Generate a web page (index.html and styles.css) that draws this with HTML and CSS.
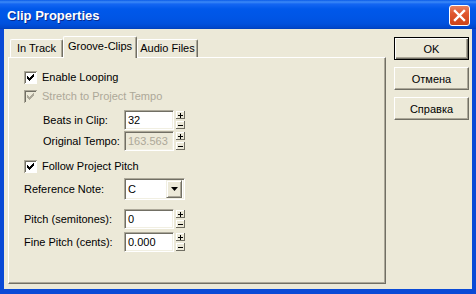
FILE: index.html
```html
<!DOCTYPE html>
<html lang="en">
<head>
    <meta charset="UTF-8">
    <title>Clip Properties</title>
    <link rel="stylesheet" href="styles.css">
</head>
<body>
    <div class="window">
        <div class="titlebar">
            <span class="title">Clip Properties</span>
            <div class="close">
                <svg width="19" height="19" viewBox="0 0 19 19">
                    <path d="M5 5L14 14M14 5L5 14" stroke="#fff" stroke-width="2.4" stroke-linecap="square"/>
                </svg>
            </div>
        </div>
        <div class="frame">
            <div class="sheet">
                <div class="tabs">
                    <div class="tab tab-track">In Track</div>
                    <div class="tab tab-groove active">Groove-Clips</div>
                    <div class="tab tab-audio">Audio Files</div>
                </div>
                <div class="panel">
                    <div class="check-row">
                        <svg class="check" width="13" height="13" viewBox="0 0 13 13">
                            <rect width="13" height="13" fill="#fff"/>
                            <path d="M0 0h13v1h-12v12h-1z" fill="#aca899"/>
                            <path d="M1 1h11v1h-10v10h-1z" fill="#716f64"/>
                            <path d="M3 5h1v3h-1zM4 6h1v3h-1zM5 7h1v3h-1zM6 6h1v3h-1zM7 5h1v3h-1zM8 4h1v3h-1zM9 3h1v3h-1z" fill="#000"/>
                        </svg>
                        <span class="check-label">Enable Looping</span>
                    </div>
                    <div class="check-row disabled stretch">
                        <svg class="check" width="13" height="13" viewBox="0 0 13 13">
                            <rect width="13" height="13" fill="#ece9d8"/>
                            <path d="M0 0h13v1h-12v12h-1z" fill="#aca899"/>
                            <path d="M1 1h11v1h-10v10h-1z" fill="#716f64"/>
                            <path d="M3 5h1v3h-1zM4 6h1v3h-1zM5 7h1v3h-1zM6 6h1v3h-1zM7 5h1v3h-1zM8 4h1v3h-1zM9 3h1v3h-1z" fill="#aca899"/>
                        </svg>
                        <span class="check-label">Stretch to Project Tempo</span>
                    </div>

                    <div class="tempo-fields">
                        <div class="field-row">
                            <span class="field-label sub">Beats in Clip:</span>
                            <div class="edit">32</div>
                            <svg class="spin" width="9" height="18" viewBox="0 0 9 18">
                                <path d="M0 0h9v8h-9z" fill="#ece9d8"/>
                                <path d="M0 0h9v1h-8v7h-1z" fill="#fff"/>
                                <path d="M8 0h1v8h-9v-1h8z" fill="#716f64"/>
                                <path d="M2 4h5v1h-5zM4 2h1v5h-1z" fill="#000"/>
                                <path d="M0 10h9v8h-9z" fill="#ece9d8"/>
                                <path d="M0 10h9v1h-8v7h-1z" fill="#fff"/>
                                <path d="M8 10h1v8h-9v-1h8z" fill="#716f64"/>
                                <path d="M2 14h5v1h-5z" fill="#000"/>
                            </svg>
                        </div>
                        <div class="field-row">
                            <span class="field-label sub">Original Tempo:</span>
                            <div class="edit disabled">163.563</div>
                            <svg class="spin" width="9" height="18" viewBox="0 0 9 18">
                                <path d="M0 0h9v8h-9z" fill="#ece9d8"/>
                                <path d="M0 0h9v1h-8v7h-1z" fill="#fff"/>
                                <path d="M8 0h1v8h-9v-1h8z" fill="#716f64"/>
                                <path d="M2 4h5v1h-5zM4 2h1v5h-1z" fill="#000"/>
                                <path d="M0 10h9v8h-9z" fill="#ece9d8"/>
                                <path d="M0 10h9v1h-8v7h-1z" fill="#fff"/>
                                <path d="M8 10h1v8h-9v-1h8z" fill="#716f64"/>
                                <path d="M2 14h5v1h-5z" fill="#000"/>
                            </svg>
                        </div>
                    </div>

                    <div class="check-row follow">
                        <svg class="check" width="13" height="13" viewBox="0 0 13 13">
                            <rect width="13" height="13" fill="#fff"/>
                            <path d="M0 0h13v1h-12v12h-1z" fill="#aca899"/>
                            <path d="M1 1h11v1h-10v10h-1z" fill="#716f64"/>
                            <path d="M3 5h1v3h-1zM4 6h1v3h-1zM5 7h1v3h-1zM6 6h1v3h-1zM7 5h1v3h-1zM8 4h1v3h-1zM9 3h1v3h-1z" fill="#000"/>
                        </svg>
                        <span class="check-label">Follow Project Pitch</span>
                    </div>

                    <div class="combo-row">
                        <span class="field-label">Reference Note:</span>
                        <div class="combo">
                            <span class="combo-value">C</span>
                            <div class="combo-button">
                                <svg width="7" height="4" viewBox="0 0 7 4">
                                    <path d="M0 0h7l-3.5 4z" fill="#000"/>
                                </svg>
                            </div>
                        </div>
                    </div>

                    <div class="pitch-fields">
                        <div class="field-row">
                            <span class="field-label">Pitch (semitones):</span>
                            <div class="edit">0</div>
                            <svg class="spin" width="9" height="18" viewBox="0 0 9 18">
                                <path d="M0 0h9v8h-9z" fill="#ece9d8"/>
                                <path d="M0 0h9v1h-8v7h-1z" fill="#fff"/>
                                <path d="M8 0h1v8h-9v-1h8z" fill="#716f64"/>
                                <path d="M2 4h5v1h-5zM4 2h1v5h-1z" fill="#000"/>
                                <path d="M0 10h9v8h-9z" fill="#ece9d8"/>
                                <path d="M0 10h9v1h-8v7h-1z" fill="#fff"/>
                                <path d="M8 10h1v8h-9v-1h8z" fill="#716f64"/>
                                <path d="M2 14h5v1h-5z" fill="#000"/>
                            </svg>
                        </div>
                        <div class="field-row">
                            <span class="field-label">Fine Pitch (cents):</span>
                            <div class="edit">0.000</div>
                            <svg class="spin" width="9" height="18" viewBox="0 0 9 18">
                                <path d="M0 0h9v8h-9z" fill="#ece9d8"/>
                                <path d="M0 0h9v1h-8v7h-1z" fill="#fff"/>
                                <path d="M8 0h1v8h-9v-1h8z" fill="#716f64"/>
                                <path d="M2 4h5v1h-5zM4 2h1v5h-1z" fill="#000"/>
                                <path d="M0 10h9v8h-9z" fill="#ece9d8"/>
                                <path d="M0 10h9v1h-8v7h-1z" fill="#fff"/>
                                <path d="M8 10h1v8h-9v-1h8z" fill="#716f64"/>
                                <path d="M2 14h5v1h-5z" fill="#000"/>
                            </svg>
                        </div>
                    </div>
                </div>
            </div>
            <div class="buttons">
                <button class="btn default">OK</button>
                <button class="btn">Отмена</button>
                <button class="btn">Справка</button>
            </div>
        </div>
    </div>
</body>
</html>
```

FILE: styles.css
```css
body {
    margin: 0;
    padding: 0;
    width: 476px;
    height: 294px;
    overflow: hidden;
    background: #0a4ad6;
    font-family: "Liberation Sans", Arial, sans-serif;
    font-size: 11px;
    color: #000;
}
.window {
    height: 294px;
    display: flex;
    flex-direction: column;
}

/* title bar */
.titlebar {
    height: 29px;
    flex: none;
    display: flex;
    align-items: center;
    justify-content: space-between;
    padding: 0 6px 0 7px;
    background: linear-gradient(to bottom, #0a5be8 0, #3d8af7 2px, #1466f2 4px, #0058ea 9px, #0055e5 18px, #0050dc 24px, #0046ca 28px, #003db4 29px);
}
.title {
    color: #fff;
    font-weight: bold;
    font-size: 13px;
    text-shadow: 1px 1px #0a2a8c;
    margin-top: 2px;
}
.close {
    width: 21px;
    height: 21px;
    box-sizing: border-box;
    border: 1px solid #fff;
    border-radius: 3px;
    background: linear-gradient(to bottom, #e8825f 0, #e0572f 40%, #cc4318 100%);
    margin-top: 2px;
}
.close svg {
    display: block;
}

/* window body */
.frame {
    flex: 1;
    display: flex;
    margin: 0 4px 5px 4px;
    padding: 7px 0 0 4px;
    background: #ece9d8;
}
.sheet {
    width: 378px;
    flex: none;
    display: flex;
    flex-direction: column;
}
.tabs {
    height: 21px;
    display: flex;
    align-items: flex-end;
    padding-left: 2px;
}
.tab {
    height: 18px;
    box-sizing: border-box;
    display: flex;
    align-items: center;
    justify-content: center;
    border-top: 1px solid #fff;
    border-left: 1px solid #fff;
    border-right: 1px solid #716f64;
    box-shadow: inset -1px 0 #aca899;
    border-radius: 2px 2px 0 0;
    background: #ece9d8;
    padding-bottom: 1px;
}
.tab-track {
    width: 53px;
}
.tab-groove {
    width: 74px;
}
.tab-audio {
    width: 61px;
}
.tab.active {
    height: 22px;
    margin-bottom: -1px;
    position: relative;
    z-index: 1;
    padding-bottom: 4px;
}
.panel {
    height: 227px;
    box-sizing: border-box;
    border: 1px solid;
    border-color: #fff #716f64 #716f64 #fff;
    box-shadow: inset -1px -1px #aca899;
    padding: 10px 0 0 15px;
}

/* rows */
.check-row {
    height: 18px;
    display: flex;
    align-items: center;
}
.check {
    display: block;
    flex: none;
}
.check-label {
    margin-left: 5px;
}
.disabled .check-label {
    color: #aca899;
}
.stretch {
    margin-top: 1px;
}
.tempo-fields {
    margin-top: 5px;
}
.follow {
    margin-top: 6px;
}
.field-row {
    height: 20px;
    display: flex;
    align-items: center;
}
.field-row + .field-row {
    margin-top: 1px;
}
.pitch-fields {
    margin-top: 9px;
}
.pitch-fields .field-row + .field-row {
    margin-top: 3px;
}
.field-label {
    width: 100px;
    flex: none;
}
.field-label.sub {
    width: 81px;
    padding-left: 19px;
}
.edit {
    width: 50px;
    height: 20px;
    box-sizing: border-box;
    border: 1px solid;
    border-color: #aca899 #fff #fff #aca899;
    box-shadow: inset 1px 1px #716f64, inset -1px -1px #f1efe2;
    background: #fff;
    padding: 3px 0 0 3px;
    line-height: 13px;
}
.edit.disabled {
    background: #ece9d8;
    color: #aca899;
}
.spin {
    display: block;
    margin-left: 2px;
}

/* combo box */
.combo-row {
    height: 22px;
    margin-top: 3px;
    display: flex;
    align-items: center;
}
.combo {
    width: 61px;
    height: 22px;
    box-sizing: border-box;
    border: 1px solid;
    border-color: #aca899 #fff #fff #aca899;
    box-shadow: inset 1px 1px #716f64, inset -1px -1px #f1efe2;
    background: #fff;
    display: flex;
    align-items: center;
    justify-content: space-between;
    padding: 2px 2px 2px 3px;
}
.combo-button {
    width: 16px;
    height: 18px;
    box-sizing: border-box;
    background: #ece9d8;
    border: 1px solid;
    border-color: #f1efe2 #716f64 #716f64 #f1efe2;
    box-shadow: inset 1px 1px #fff, inset -1px -1px #aca899;
    display: flex;
    align-items: center;
    justify-content: center;
}
.combo-button svg {
    display: block;
}

/* dialog buttons */
.buttons {
    width: 75px;
    margin: 1px 0 0 8px;
    display: flex;
    flex-direction: column;
    gap: 7px;
}
.btn {
    height: 23px;
    margin: 0;
    padding: 0;
    box-sizing: border-box;
    font-family: "Liberation Sans", Arial, sans-serif;
    font-size: 11px;
    font-weight: normal;
    color: #000;
    background: #ece9d8;
    border: 1px solid;
    border-color: #fff #716f64 #716f64 #fff;
    box-shadow: inset -1px -1px #aca899;
}
.btn.default {
    border: 1px solid #000;
    box-shadow: inset 1px 1px #fff, inset -1px -1px #716f64, inset -2px -2px #aca899;
}
```
